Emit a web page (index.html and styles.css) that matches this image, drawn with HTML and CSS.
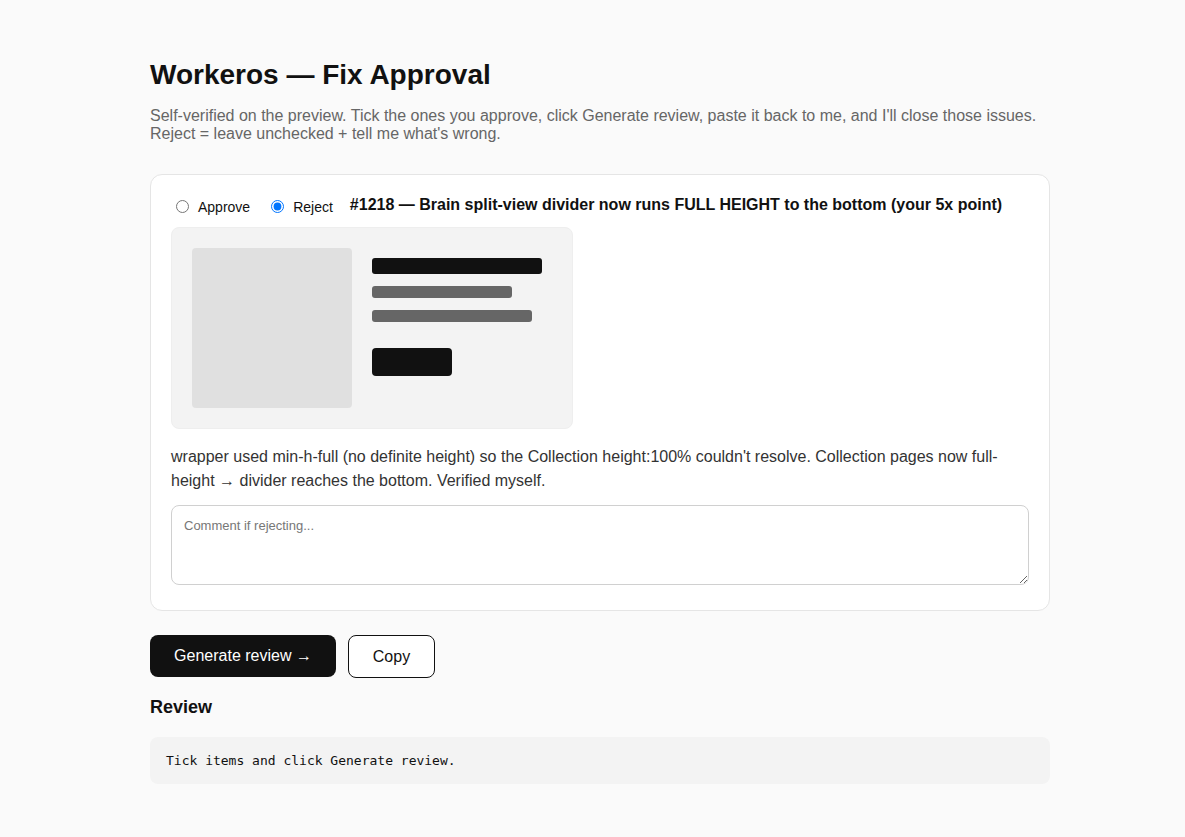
FILE: index.html
```html
<!DOCTYPE html>
<html lang="en">
<head>
  <meta charset="UTF-8" />
  <meta name="viewport" content="width=device-width, initial-scale=1.0"/>
  <title>Workeros — Fix Approval</title>
  <link rel="stylesheet" href="styles.css">
</head>
<body>

<div class="wrap">
  <h1>Workeros — Fix Approval</h1>
  <p class="intro">Self-verified on the preview. Tick the ones you approve, click Generate review, paste it back to me, and I'll close those issues.<br>Reject = leave unchecked + tell me what's wrong.</p>

  <!-- Fix item -->
  <div class="item">
    <div class="item-head">
      <label class="choice"><input type="radio" name="fix1218" value="approve"> Approve</label>
      <label class="choice"><input type="radio" name="fix1218" value="reject" checked> Reject</label>
      <span class="item-title">#1218 — Brain split-view divider now runs FULL HEIGHT to the bottom (your 5x point)</span>
    </div>

    <div class="mock">
      <div class="mock-thumb"></div>
      <div class="mock-body">
        <div class="bar bar-title"></div>
        <div class="bar bar-line"></div>
        <div class="bar bar-line long"></div>
        <div class="mock-btn"></div>
      </div>
    </div>

    <p class="item-desc">wrapper used min-h-full (no definite height) so the Collection height:100% couldn't resolve. Collection pages now full-height → divider reaches the bottom. Verified myself.</p>

    <textarea class="comment" placeholder="Comment if rejecting..."></textarea>
  </div>

  <div class="actions">
    <button class="btn btn-dark" onclick="generate()">Generate review →</button>
    <button class="btn btn-light" onclick="copyReview()">Copy</button>
  </div>

  <h2>Review</h2>
  <pre id="review">Tick items and click Generate review.</pre>
</div>

<script>
  function generate() {
    const pick = document.querySelector('input[name="fix1218"]:checked');
    const note = document.querySelector('.comment').value.trim();
    let out = '#1218: ' + (pick ? pick.value.toUpperCase() : 'NO DECISION');
    if (note) out += ' — ' + note;
    document.getElementById("review").textContent = out;
  }

  function copyReview() {
    const text = document.getElementById("review").textContent;
    if (navigator.clipboard) navigator.clipboard.writeText(text);
  }
</script>

</body>
</html>
```

FILE: styles.css
```css
body {
  margin: 0;
  font-family: 'Liberation Sans', Arial, sans-serif;
  background: #fafafa;
  color: #111;
}
.wrap {
  width: 900px;
  margin: 0 0 0 150px;
  padding: 57px 0 40px;
}
h1 {
  font-size: 28px;
  margin: 0 0 14px;
  line-height: 36px;
}
.intro {
  margin: 0 0 31px;
  color: #666;
  font-size: 16px;
  line-height: 18px;
}
.item {
  background: white;
  border: 1px solid #e5e5e5;
  border-radius: 12px;
  padding: 20px;
}
.item-head {
  display: flex;
  align-items: center;
  height: 18px;
  margin-top: 1px;
}
.choice {
  display: flex;
  align-items: center;
  font-size: 14px;
  margin-right: 16px;
  margin-top: 3px;
}
.choice input {
  margin: 0 9px 0 5px;
  width: 13px;
  height: 13px;
}
.item-title {
  font-weight: bold;
  font-size: 16px;
  margin-left: 1px;
}
.mock {
  display: flex;
  gap: 20px;
  width: 360px;
  padding: 20px;
  margin-top: 13px;
  background: #f3f3f3;
  border: 1px solid #eee;
  border-radius: 8px;
}
.mock-thumb {
  width: 160px;
  height: 160px;
  background: #e0e0e0;
  border-radius: 4px;
}
.mock-body {
  padding-top: 10px;
}
.bar {
  border-radius: 3px;
  margin-bottom: 12px;
}
.bar-title {
  width: 170px;
  height: 16px;
  background: #111;
}
.bar-line {
  width: 140px;
  height: 12px;
  background: #666;
}
.bar-line.long {
  width: 160px;
}
.mock-btn {
  width: 80px;
  height: 28px;
  margin-top: 26px;
  background: #111;
  border-radius: 4px;
}
.item-desc {
  margin: 16px 0 12px;
  font-size: 16px;
  line-height: 24px;
  color: #333;
}
.comment {
  display: block;
  width: 100%;
  height: 80px;
  box-sizing: border-box;
  padding: 12px;
  border: 1px solid #d0d0d0;
  border-radius: 8px;
  font-family: 'Liberation Sans', Arial, sans-serif;
  font-size: 13px;
  margin-bottom: 5px;
}
.comment::placeholder {
  color: #777;
}
.actions {
  display: flex;
  gap: 12px;
  margin-top: 24px;
}
.btn {
  font-family: 'Liberation Sans', Arial, sans-serif;
  font-size: 16px;
  height: 42px;
  padding: 0 24px;
  border-radius: 8px;
  cursor: pointer;
}
.btn-dark {
  background: #111;
  color: white;
  border: none;
  width: 186px;
}
.btn-light {
  background: white;
  color: #111;
  border: 1px solid #111;
  height: 43px;
  width: 87px;
  padding: 0;
}
h2 {
  font-size: 18px;
  margin: 18px 0 19px;
  line-height: 22px;
}
pre {
  margin: 0;
  background: #f3f3f3;
  border-radius: 8px;
  padding: 16px;
  font-family: 'DejaVu Sans Mono', monospace;
  font-size: 13px;
  line-height: 15px;
}
```
